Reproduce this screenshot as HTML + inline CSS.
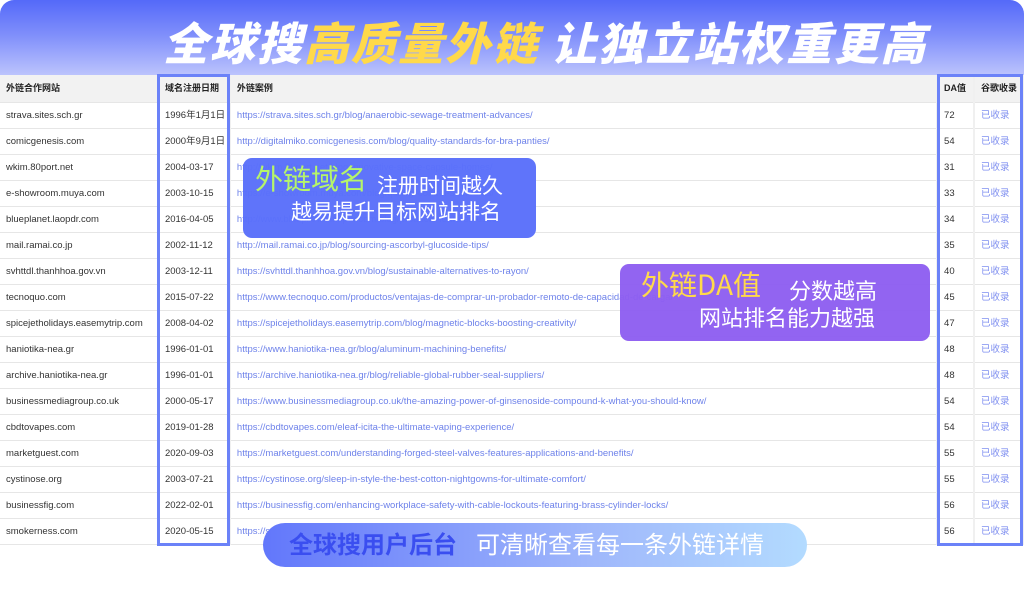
<!DOCTYPE html><html><head><meta charset="utf-8"><style>
*{margin:0;padding:0;box-sizing:border-box}
body{width:1024px;height:600px;overflow:hidden;background:#fff;font-family:"Liberation Sans","Noto Sans CJK SC",sans-serif;position:relative}
.top{position:absolute;left:0;top:0;width:1024px;height:80px;border-radius:14px 14px 0 0;background:linear-gradient(180deg,#5469f9 0%,#8190fb 45%,#c3cafd 100%)}
.title{position:absolute;left:163px;top:8px;font-size:45px;font-weight:900;font-style:italic;color:#fff;letter-spacing:2px;white-space:nowrap;font-family:"Noto Sans CJK SC",sans-serif}
.title span{color:#ffd94a}
table{position:absolute;left:0;top:75px;border-collapse:collapse;font-size:9.5px;color:#333;table-layout:fixed}
td{height:26px;line-height:25px;vertical-align:middle;border-bottom:1px solid #e6e6e6;border-right:2px solid #f0f0f0;padding-left:6px;white-space:nowrap;overflow:hidden;background:#fff}
tr.h td{height:27px;background:#f2f2f2;font-weight:bold;font-size:9px;color:#222}
td.u{color:#6e82ea}
td.k{color:#7f8ff0}
.box{position:absolute;border:3px solid #6b82f8;top:74px;height:472px}
.c1{position:absolute;left:243px;top:158px;width:293px;height:80px;background:#5a6ffa;border-radius:9px;opacity:.97}
.c2{position:absolute;left:620px;top:264px;width:310px;height:77px;background:#8e5ef0;border-radius:9px;opacity:.96}
.c3{position:absolute;left:263px;top:523px;width:544px;height:44px;border-radius:22px;background:linear-gradient(90deg,#6277fb,#9fb7fb 60%,#b3dbff)}
.t{position:absolute;color:#fff;white-space:nowrap;font-family:"Noto Sans CJK SC",sans-serif;line-height:1.2}
</style></head><body>
<div class="top"></div>
<div class="title">全球搜<span>高质量外链</span> 让独立站权重更高</div>
<table>
<colgroup><col style="width:158px"><col style="width:72px"><col style="width:708px"><col style="width:37px"><col style="width:49px"></colgroup>
<tr class="h"><td>外链合作网站</td><td>域名注册日期</td><td>外链案例</td><td>DA值</td><td>谷歌收录</td></tr>
<tr><td>strava.sites.sch.gr</td><td>1996年1月1日</td><td class="u">https://strava.sites.sch.gr/blog/anaerobic-sewage-treatment-advances/</td><td>72</td><td class="k">已收录</td></tr>
<tr><td>comicgenesis.com</td><td>2000年9月1日</td><td class="u">http://digitalmiko.comicgenesis.com/blog/quality-standards-for-bra-panties/</td><td>54</td><td class="k">已收录</td></tr>
<tr><td>wkim.80port.net</td><td>2004-03-17</td><td class="u">http://wkim.80port.net/blog/innovative-space-capsule-homes/</td><td>31</td><td class="k">已收录</td></tr>
<tr><td>e-showroom.muya.com</td><td>2003-10-15</td><td class="u">https://e-showroom.muya.com/blog/quality-control-standards/</td><td>33</td><td class="k">已收录</td></tr>
<tr><td>blueplanet.laopdr.com</td><td>2016-04-05</td><td class="u">http://www.blueplanet.laopdr.com/blog/products-features-uses/</td><td>34</td><td class="k">已收录</td></tr>
<tr><td>mail.ramai.co.jp</td><td>2002-11-12</td><td class="u">http://mail.ramai.co.jp/blog/sourcing-ascorbyl-glucoside-tips/</td><td>35</td><td class="k">已收录</td></tr>
<tr><td>svhttdl.thanhhoa.gov.vn</td><td>2003-12-11</td><td class="u">https://svhttdl.thanhhoa.gov.vn/blog/sustainable-alternatives-to-rayon/</td><td>40</td><td class="k">已收录</td></tr>
<tr><td>tecnoquo.com</td><td>2015-07-22</td><td class="u">https://www.tecnoquo.com/productos/ventajas-de-comprar-un-probador-remoto-de-capacidad-de-carga/</td><td>45</td><td class="k">已收录</td></tr>
<tr><td>spicejetholidays.easemytrip.com</td><td>2008-04-02</td><td class="u">https://spicejetholidays.easemytrip.com/blog/magnetic-blocks-boosting-creativity/</td><td>47</td><td class="k">已收录</td></tr>
<tr><td>haniotika-nea.gr</td><td>1996-01-01</td><td class="u">https://www.haniotika-nea.gr/blog/aluminum-machining-benefits/</td><td>48</td><td class="k">已收录</td></tr>
<tr><td>archive.haniotika-nea.gr</td><td>1996-01-01</td><td class="u">https://archive.haniotika-nea.gr/blog/reliable-global-rubber-seal-suppliers/</td><td>48</td><td class="k">已收录</td></tr>
<tr><td>businessmediagroup.co.uk</td><td>2000-05-17</td><td class="u">https://www.businessmediagroup.co.uk/the-amazing-power-of-ginsenoside-compound-k-what-you-should-know/</td><td>54</td><td class="k">已收录</td></tr>
<tr><td>cbdtovapes.com</td><td>2019-01-28</td><td class="u">https://cbdtovapes.com/eleaf-icita-the-ultimate-vaping-experience/</td><td>54</td><td class="k">已收录</td></tr>
<tr><td>marketguest.com</td><td>2020-09-03</td><td class="u">https://marketguest.com/understanding-forged-steel-valves-features-applications-and-benefits/</td><td>55</td><td class="k">已收录</td></tr>
<tr><td>cystinose.org</td><td>2003-07-21</td><td class="u">https://cystinose.org/sleep-in-style-the-best-cotton-nightgowns-for-ultimate-comfort/</td><td>55</td><td class="k">已收录</td></tr>
<tr><td>businessfig.com</td><td>2022-02-01</td><td class="u">https://businessfig.com/enhancing-workplace-safety-with-cable-lockouts-featuring-brass-cylinder-locks/</td><td>56</td><td class="k">已收录</td></tr>
<tr><td>smokerness.com</td><td>2020-05-15</td><td class="u">https://smokerness.com/top-10-best-vape-kits-in-2025/</td><td>56</td><td class="k">已收录</td></tr>
</table>
<div class="box" style="left:157px;width:73px"></div>
<div class="box" style="left:937px;width:86px"></div>
<div class="c1"></div>
<div class="t" style="left:255px;top:162px;font-size:28px;color:#b6f56a">外链域名</div>
<div class="t" style="left:377px;top:173px;font-size:21px">注册时间越久</div>
<div class="t" style="left:291px;top:199px;font-size:21px">越易提升目标网站排名</div>
<div class="c2"></div>
<div class="t" style="left:641px;top:268px;font-size:28px;color:#ffd94a">外链DA值</div>
<div class="t" style="left:789px;top:277px;font-size:22px">分数越高</div>
<div class="t" style="left:699px;top:304px;font-size:22px">网站排名能力越强</div>
<div class="c3"></div>
<div class="t" style="left:289px;top:529px;font-size:24px;font-weight:bold;color:#3a4ef0">全球搜用户后台</div>
<div class="t" style="left:476px;top:529px;font-size:24px">可清晰查看每一条外链详情</div>
</body></html>
